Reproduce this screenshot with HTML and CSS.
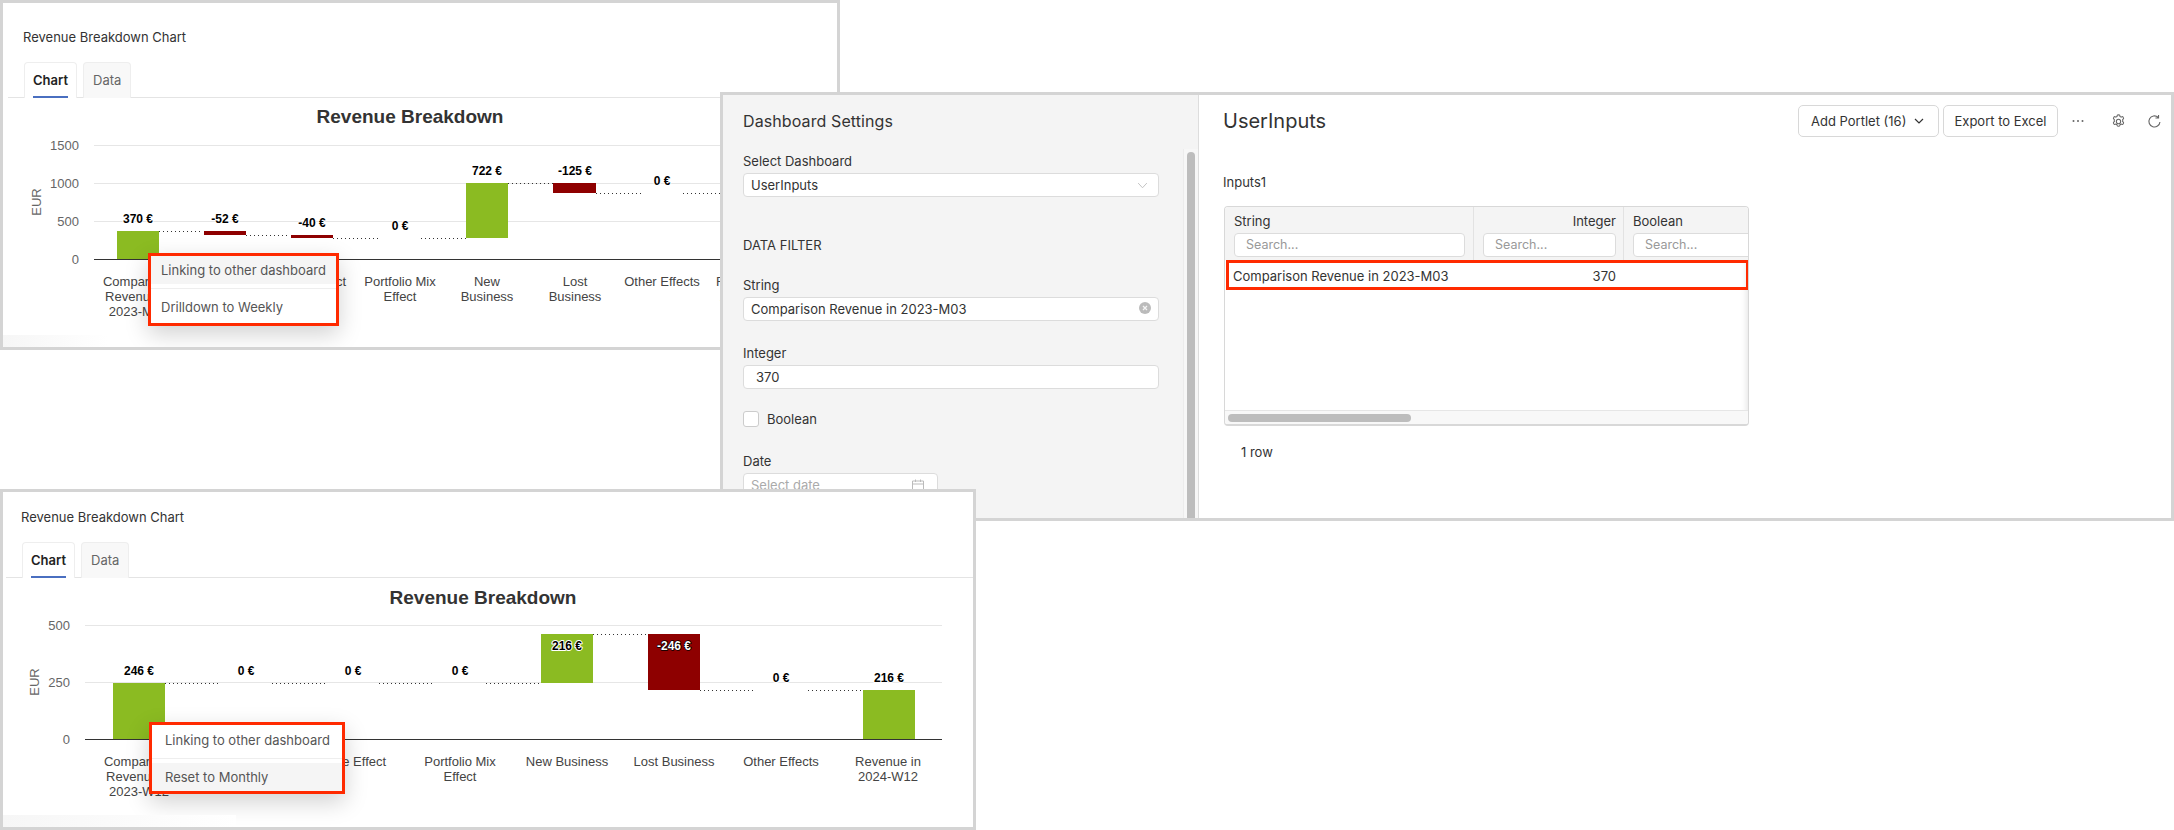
FILE: index.html
```html
<!DOCTYPE html>
<html lang="en">
<head>
<meta charset="utf-8">
<title>Revenue Breakdown</title>
<link rel="stylesheet" href="styles.css">
</head>
<body>
<section class="window win-a">
  <div class="chart-head">Revenue Breakdown Chart</div>
  <div class="tabs"><div class="tab active"><span>Chart</span></div><div class="tab"><span>Data</span></div></div>
  <svg class="chart chart-a" viewBox="3 98 834 249">
    <text class="ctitle" x="410" y="123" text-anchor="middle">Revenue Breakdown</text>
    <line class="grid" x1="94" x2="837" y1="145.5" y2="145.5"/><line class="grid" x1="94" x2="837" y1="183.5" y2="183.5"/><line class="grid" x1="94" x2="837" y1="221.5" y2="221.5"/>
    <line class="axis" x1="94" x2="837" y1="259.5" y2="259.5"/>
    <text class="tick" x="79" y="150" text-anchor="end">1500</text><text class="tick" x="79" y="188" text-anchor="end">1000</text><text class="tick" x="79" y="226" text-anchor="end">500</text><text class="tick" x="79" y="264" text-anchor="end">0</text>
    <text class="tick" transform="translate(41 202) rotate(-90)" text-anchor="middle">EUR</text>
    <rect class="up" x="117" y="231" width="42" height="28"/><rect class="down" x="204" y="231" width="42" height="4"/><rect class="down" x="291" y="235" width="42" height="3"/><rect class="up" x="466" y="183" width="42" height="55"/><rect class="down" x="553" y="183" width="43" height="10"/>
    <line class="conn" x1="159" x2="203" y1="231.5" y2="231.5"/><line class="conn" x1="246" x2="290" y1="235.5" y2="235.5"/><line class="conn" x1="333" x2="378" y1="238.5" y2="238.5"/><line class="conn" x1="421" x2="466" y1="238.5" y2="238.5"/><line class="conn" x1="508" x2="553" y1="183.5" y2="183.5"/><line class="conn" x1="596" x2="641" y1="193.5" y2="193.5"/><line class="conn" x1="683" x2="728" y1="193.5" y2="193.5"/>
    <text class="dlab" x="138" y="223" text-anchor="middle">370 €</text><text class="dlab" x="225" y="223" text-anchor="middle">-52 €</text><text class="dlab" x="312" y="227" text-anchor="middle">-40 €</text><text class="dlab" x="400" y="230" text-anchor="middle">0 €</text><text class="dlab" x="487" y="175" text-anchor="middle">722 €</text><text class="dlab" x="575" y="175" text-anchor="middle">-125 €</text><text class="dlab" x="662" y="185" text-anchor="middle">0 €</text>
    <text class="cat" text-anchor="middle"><tspan x="138" y="286">Comparison</tspan><tspan x="138" y="301">Revenue in</tspan><tspan x="138" y="316">2023-M03</tspan></text>
    <text class="cat" x="225" y="286" text-anchor="middle">Volume Effect</text><text class="cat" x="313" y="286" text-anchor="middle">Price Effect</text>
    <text class="cat" text-anchor="middle"><tspan x="400" y="286">Portfolio Mix</tspan><tspan x="400" y="301">Effect</tspan></text>
    <text class="cat" text-anchor="middle"><tspan x="487" y="286">New</tspan><tspan x="487" y="301">Business</tspan></text>
    <text class="cat" text-anchor="middle"><tspan x="575" y="286">Lost</tspan><tspan x="575" y="301">Business</tspan></text>
    <text class="cat" x="662" y="286" text-anchor="middle">Other Effects</text>
    <text class="cat" text-anchor="middle"><tspan x="749" y="286">Revenue in</tspan><tspan x="749" y="301">2024-M03</tspan></text>
  </svg>
  <div class="menu menu-a">
    <div class="menu-item hover">Linking to other dashboard</div>
    <div class="menu-sep"></div>
    <div class="menu-item">Drilldown to Weekly</div>
  </div>
</section>

<section class="window win-b">
  <aside class="side">
    <h2 class="side-title">Dashboard Settings</h2>
    <div class="side-body">
      <label class="flabel">Select Dashboard</label>
      <div class="field"><span>UserInputs</span>
        <svg class="ico-sel" viewBox="0 0 12 8"><path d="M1 1.2 6 6.6l5-5.4"/></svg></div>
      <div class="section-label">DATA FILTER</div>
      <label class="flabel gap">String</label>
      <div class="field"><span>Comparison Revenue in 2023-M03</span>
        <svg class="ico-clear" viewBox="0 0 12 12"><circle cx="6" cy="6" r="6"/><path d="M4 4l4 4M8 4l-4 4"/></svg></div>
      <label class="flabel gap">Integer</label>
      <div class="field num"><span>370</span></div>
      <div class="check-row"><span class="check"></span><span>Boolean</span></div>
      <label class="flabel date-gap">Date</label>
      <div class="field date"><span class="ph">Select date</span>
        <svg class="ico-cal" viewBox="0 0 12 12"><path d="M.5 2h11v9.5H.5zM.5 5h11M3.5.5V3M8.5.5V3"/></svg></div>
    </div>
    <div class="track"><div class="thumb"></div></div>
  </aside>
  <main class="main">
    <header class="main-head">
      <h1 class="main-title">UserInputs</h1>
      <div class="actions">
        <button class="btn">Add Portlet (16)<svg class="ico-chev" viewBox="0 0 10 6"><path d="M1 1l4 4 4-4"/></svg></button>
        <button class="btn">Export to Excel</button>
        <span class="slot more"><svg viewBox="0 0 14 4"><circle cx="2.5" cy="2" r="1"/><circle cx="7" cy="2" r="1"/><circle cx="11.500" cy="2" r="1"/></svg></span>
        <span class="slot gear"><svg viewBox="0 0 16 16"><path d="M6.700 1.300c.2-.5 2.400-.5 2.600 0l.3 1.400c.4.100.8.300 1.200.6l1.300-.5c.5-.2 1.600 1.700 1.300 2.200l-1 1c.1.300.1.600.1 1s0 .7-.1 1l1 1c.3.500-.8 2.400-1.300 2.200l-1.300-.5c-.4.300-.8.500-1.200.6l-.3 1.400c-.2.500-2.400.5-2.600 0l-.3-1.400c-.4-.1-.8-.3-1.200-.6l-1.300.5c-.5.2-1.600-1.700-1.300-2.200l1-1c-.1-.3-.1-.6-.1-1s0-.7.1-1l-1-1c-.3-.5.8-2.400 1.300-2.200l1.300.5c.4-.3.8-.5 1.200-.6z"/><circle cx="8" cy="8" r="2.300"/></svg></span>
        <span class="slot refresh"><svg viewBox="0 0 16 16"><path d="M13.800 8.500A5.900 5.900 0 1 1 11.800 3.500M12.300 1v3.200H9"/></svg></span>
      </div>
    </header>
    <div class="portlet-name">Inputs1</div>
    <div class="table">
      <div class="thead">
        <div class="th c1"><div class="th-label">String</div><div class="search">Search...</div></div>
        <div class="th c2"><div class="th-label right">Integer</div><div class="search">Search...</div></div>
        <div class="th c3"><div class="th-label">Boolean</div><div class="search">Search...</div></div>
      </div>
      <div class="tbody">
        <div class="row"><span class="cell-str">Comparison Revenue in 2023-M03</span><span class="cell-int">370</span></div>
      </div>
      <div class="hscroll"><div class="hthumb"></div></div>
      <div class="row-mark"></div>
    </div>
    <div class="row-count">1 row</div>
  </main>
</section>

<section class="window win-c">
  <div class="chart-head">Revenue Breakdown Chart</div>
  <div class="tabs"><div class="tab active"><span>Chart</span></div><div class="tab"><span>Data</span></div></div>
  <svg class="chart chart-c" viewBox="3 578 970 249">
    <text class="ctitle" x="483" y="604" text-anchor="middle">Revenue Breakdown</text>
    <line class="grid" x1="85" x2="942" y1="625.5" y2="625.5"/><line class="grid" x1="85" x2="942" y1="682.500" y2="682.500"/>
    <line class="axis" x1="85" x2="942" y1="739.500" y2="739.500"/>
    <text class="tick" x="70" y="630" text-anchor="end">500</text><text class="tick" x="70" y="687" text-anchor="end">250</text><text class="tick" x="70" y="744" text-anchor="end">0</text>
    <text class="tick" transform="translate(39 682) rotate(-90)" text-anchor="middle">EUR</text>
    <rect class="up" x="113" y="683" width="52" height="56"/><rect class="up" x="541" y="634" width="52" height="49"/><rect class="down" x="648" y="634" width="52" height="56"/><rect class="up" x="863" y="690" width="52" height="49"/>
    <line class="conn" x1="165" x2="219" y1="683.500" y2="683.500"/><line class="conn" x1="272" x2="326" y1="683.500" y2="683.500"/><line class="conn" x1="379" x2="433" y1="683.500" y2="683.500"/><line class="conn" x1="486" x2="540" y1="683.500" y2="683.500"/><line class="conn" x1="593" x2="647" y1="634.500" y2="634.500"/><line class="conn" x1="700" x2="754" y1="690.500" y2="690.500"/><line class="conn" x1="808" x2="862" y1="690.500" y2="690.500"/>
    <text class="dlab" x="139" y="675" text-anchor="middle">246 €</text><text class="dlab" x="246" y="675" text-anchor="middle">0 €</text><text class="dlab" x="353" y="675" text-anchor="middle">0 €</text><text class="dlab" x="460" y="675" text-anchor="middle">0 €</text><text class="dlab" x="567" y="650" text-anchor="middle">216 €</text><text class="dlab inv" x="674" y="650" text-anchor="middle">-246 €</text><text class="dlab" x="781" y="682" text-anchor="middle">0 €</text><text class="dlab" x="889" y="682" text-anchor="middle">216 €</text>
    <text class="cat" text-anchor="middle"><tspan x="139" y="766">Comparison</tspan><tspan x="139" y="781">Revenue in</tspan><tspan x="139" y="796">2023-W12</tspan></text>
    <text class="cat" x="246" y="766" text-anchor="middle">Volume Effect</text><text class="cat" x="353" y="766" text-anchor="middle">Price Effect</text>
    <text class="cat" text-anchor="middle"><tspan x="460" y="766">Portfolio Mix</tspan><tspan x="460" y="781">Effect</tspan></text>
    <text class="cat" x="567" y="766" text-anchor="middle">New Business</text><text class="cat" x="674" y="766" text-anchor="middle">Lost Business</text><text class="cat" x="781" y="766" text-anchor="middle">Other Effects</text>
    <text class="cat" text-anchor="middle"><tspan x="888" y="766">Revenue in</tspan><tspan x="888" y="781">2024-W12</tspan></text>
  </svg>
  <div class="menu menu-c">
    <div class="menu-item">Linking to other dashboard</div>
    <div class="menu-sep"></div>
    <div class="menu-item hover">Reset to Monthly</div>
  </div>
</section>
</body>
</html>
```

FILE: styles.css
```css
* { box-sizing: border-box; }
html, body { margin: 0; padding: 0; }
body { width: 2174px; height: 830px; position: relative; overflow: hidden; background: #fff; font-family: Inter, "Liberation Sans", sans-serif; font-size: 13px; color: #333; }
.window { position: absolute; background: #fff; border: 3px solid #d4d4d4; overflow: hidden; }
.win-a { left: 0; top: 0; width: 840px; height: 350px; }
.win-b { left: 720px; top: 92px; width: 1454px; height: 429px; display: flex; }
.win-c { left: 0; top: 489px; width: 976px; height: 341px; }
.win-a::after, .win-c::after { content: ""; position: absolute; left: 0; bottom: 0; height: 12px; background: linear-gradient(90deg, #f6f6f6, #fff); }
.win-a::after { width: 105px; }
.win-c::after { width: 233px; }

.chart-head { height: 59px; padding: 26px 0 0 20px; font-size: 13px; line-height: 16px; color: #333; }
.win-c .chart-head { height: 50px; padding: 17px 0 0 18px; }
.tabs { display: flex; gap: 6px; height: 36px; padding-left: 16px; border-bottom: 1px solid #e4e4e4; margin-left: 5px; }
.win-c .tabs { margin-left: 3px; }
.tab { height: 36px; padding: 0 9px; border: 1px solid #eee; border-bottom: 0; border-radius: 4px 4px 0 0; background: #f8f8f8; line-height: 34px; color: #666; }
.tab.active { background: #fff; padding: 0 8px; }
.tab.active span { display: block; height: 35px; border-bottom: 2px solid #4a6fc0; color: #222; font-weight: 600; }
.chart { display: block; }
.chart-a { width: 834px; height: 249px; }
.chart-c { width: 970px; height: 249px; }
.ctitle { font: bold 19px "Liberation Sans", sans-serif; fill: #333; }
.grid { stroke: #e6e6e6; stroke-width: 1; }
.axis { stroke: #333; stroke-width: 1; }
.conn { stroke: #333; stroke-width: 1; stroke-dasharray: 1 3; }
.up { fill: #8bbb22; }
.down { fill: #8e0000; }
.tick { font: 13px "Liberation Sans", sans-serif; fill: #666; }
.cat { font: 13px "Liberation Sans", sans-serif; fill: #444; }
.dlab { font: bold 12px "Liberation Sans", sans-serif; fill: #000; stroke: #fff; stroke-width: 2px; paint-order: stroke; stroke-linejoin: round; }
.dlab.inv { fill: #fff; stroke: #000; stroke-width: 1.500px; }

.menu { position: absolute; background: #fff; border: 3px solid #ff2a00; box-shadow: 0 8px 22px rgba(0,0,0,.18); color: #555; font-size: 13px; }
.menu-a { left: 145px; top: 250px; width: 191px; height: 73px; }
.menu-c { left: 146px; top: 230px; width: 196px; height: 72px; }
.menu-item { padding-left: 10px; white-space: nowrap; }
.menu-item.hover { background: #f5f5f5; }
.menu-sep { border-bottom: 1px solid #eee; }
.menu-a .menu-item:first-child { height: 28px; line-height: 28px; }
.menu-a .menu-sep { height: 5px; }
.menu-a .menu-item:last-child { height: 34px; line-height: 37px; }
.menu-c .menu-item { padding-left: 13px; }
.menu-c .menu-item:first-child { height: 32px; line-height: 31px; }
.menu-c .menu-sep { height: 2px; margin-bottom: 4px; }
.menu-c .menu-item:last-child { height: 28px; line-height: 28px; }

.side { position: relative; width: 476px; flex: none; background: #f4f4f4; border-right: 1px solid #ddd; }
.side-title { margin: 0; padding: 16px 0 0 20px; height: 54px; font-size: 16px; line-height: 20px; font-weight: 400; letter-spacing: .1px; color: #333; }
.side-body { padding: 4px 39px 0 20px; }
.flabel { display: block; height: 16px; line-height: 16px; margin-bottom: 4px; color: #333; }
.flabel.gap { margin-top: 24px; }
.flabel.date-gap { margin-top: 26px; }
.section-label { margin-top: 40px; height: 16px; line-height: 16px; font-weight: 400; color: #333; }
.field { display: flex; align-items: center; justify-content: space-between; width: 416px; height: 24px; padding: 0 7px; background: #fff; border: 1px solid #dcdcdc; border-radius: 4px; color: #333; }
.field.num { padding-left: 12px; }
.field.date { width: 195px; }
.ph { color: #aaa; }
.check-row { display: flex; align-items: center; gap: 8px; margin-top: 22px; height: 16px; }
.check { width: 16px; height: 16px; background: #fff; border: 1px solid #ccc; border-radius: 3px; }
.ico-sel { width: 11px; height: 7px; margin-right: 3px; fill: none; stroke: #bbb; stroke-width: 1; }
.ico-clear { width: 12px; height: 12px; margin-bottom: 2px; }
.ico-clear circle { fill: #bbb; }
.ico-clear path { stroke: #f4f4f4; stroke-width: 1.300; }
.ico-cal { width: 12px; height: 12px; margin-right: 6px; fill: none; stroke: #bbb; stroke-width: 1; }
.track { position: absolute; left: 460px; top: 54px; bottom: 0; width: 15px; background: #f7f7f7; border-left: 1px solid #ececec; }
.thumb { position: absolute; left: 3px; top: 3px; bottom: -8px; width: 8px; border-radius: 4px; background: #bdbdbd; }

.main { flex: 1; padding-left: 24px; }
.main-head { display: flex; align-items: center; justify-content: space-between; height: 32px; margin-top: 10px; }
.main-title { margin: 0; font-size: 20px; line-height: 28px; font-weight: 400; color: #333; }
.actions { display: flex; align-items: center; gap: 4px; }
.btn { display: flex; align-items: center; height: 32px; padding: 0 12px; background: #fff; border: 1px solid #d8d8d8; border-radius: 5px; font: 400 13px Inter, sans-serif; color: #333; }
.btn:first-child { width: 141px; }
.btn:nth-child(2) { width: 115px; justify-content: center; padding: 0; }
.ico-chev { width: 10px; height: 6px; margin-left: 8px; fill: none; stroke: #333; stroke-width: 1.200; }
.slot { display: flex; align-items: center; justify-content: center; height: 32px; }
.slot svg { display: block; }
.more { width: 36px; margin-left: -2px; }
.more svg { width: 14px; height: 4px; fill: #666; }
.gear { width: 36px; }
.gear svg { width: 15px; height: 15px; fill: none; stroke: #666; stroke-width: 1.100; }
.refresh { width: 34px; margin-left: -3px; }
.refresh svg { width: 15px; height: 15px; fill: none; stroke: #666; stroke-width: 1.200; }
.portlet-name { margin-top: 37px; height: 16px; line-height: 16px; color: #333; }
.table { position: relative; width: 525px; height: 220px; margin: 16px 0 0 1px; border: 1px solid #d8d8d8; border-bottom-width: 2px; border-radius: 4px; overflow: hidden; }
.thead { display: flex; height: 53px; background: #f4f4f4; }
.th { flex: none; height: 53px; padding: 4px 0 0 9px; border-right: 1px solid #e2e2e2; }
.c1 { width: 249px; }
.c2 { width: 150px; }
.c3 { width: 151px; border-right: 0; }
.th-label { height: 20px; line-height: 20px; color: #333; font-weight: 400; }
.th-label.right { text-align: right; padding-right: 7px; }
.search { width: 231px; height: 24px; margin-top: 2px; padding-left: 11px; background: #fff; border: 1px solid #dcdcdc; border-radius: 4px; line-height: 22px; color: #999; font-size: 12.500px; }
.c2 .search { width: 133px; }
.c3 .search { width: 150px; }
.tbody { position: relative; height: 150px; box-shadow: inset -7px 0 6px -6px rgba(0,0,0,.12); }
.row { display: flex; height: 30px; line-height: 33px; color: #333; }
.cell-str { flex: none; width: 249px; padding-left: 8px; white-space: nowrap; }
.cell-int { flex: none; width: 142px; text-align: right; }
.hscroll { position: relative; height: 15px; background: #f8f8f8; border-top: 1px solid #e6e6e6; }
.hthumb { position: absolute; left: 3px; top: 3px; width: 183px; height: 8px; border-radius: 4px; background: #bdbdbd; }
.row-mark { position: absolute; left: 1px; top: 53px; right: -1px; height: 30px; border: 3px solid #ff2a00; }
.row-count { margin-top: 18px; padding-left: 18px; height: 16px; line-height: 16px; color: #333; }
```
